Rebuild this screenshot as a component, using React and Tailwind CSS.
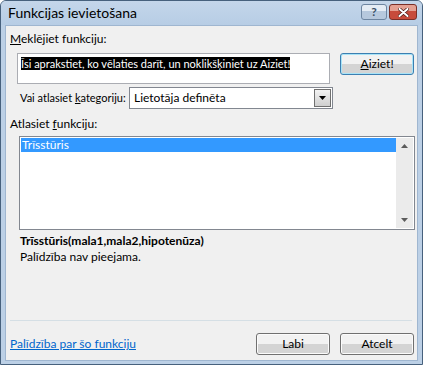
import React from "react";

const font = { fontFamily: 'Lato, "Noto Sans", sans-serif' };

function Btn({ children, primary, className = "" }) {
  return (
    <button
      className={
        "h-[22px] w-[74px] rounded-[3px] border text-[12px] text-black bg-gradient-to-b from-[#f2f2f2] from-50% to-[#d4d4d4] to-50% " +
        (primary
          ? "border-[#3c7fb1] shadow-[inset_0_0_0_1px_#a8e3f7] "
          : "border-[#707070] shadow-[inset_0_0_0_1px_#fbfbfb] ") +
        className
      }
    >
      {children}
    </button>
  );
}

export default function App() {
  return (
    <div
      className="w-[423px] h-[365px] bg-[#bcd0e6] border border-[#47617d] rounded-t-[6px] flex flex-col text-[11px] text-black overflow-hidden"
      style={font}
    >
      {/* title bar */}
      <div className="h-[24px] flex items-center pl-[7px] pr-[5px] bg-gradient-to-b from-[#c4d6ea] to-[#b7cde5]">
        <span className="text-[14px] leading-none">Funkcijas ievietošana</span>
        <div className="ml-auto flex gap-[2px] -mt-[2px]">
          <div className="w-[26px] h-[16px] rounded-[3px] border border-[#6d85a1] bg-gradient-to-b from-[#e4ecf5] from-45% to-[#b6c8dd] to-45% flex items-center justify-center text-[12px] font-bold text-[#3b4f66] leading-none">
            ?
          </div>
          <div className="w-[28px] h-[16px] rounded-[3px] border border-[#7a2f27] bg-gradient-to-b from-[#e4a092] from-45% to-[#c74b3b] to-45% flex items-center justify-center">
            <svg width="11" height="9" viewBox="0 0 11 9">
              <path d="M1.5 1 L9.5 8 M9.5 1 L1.5 8" stroke="#4a1a15" strokeWidth="3.4" strokeLinecap="round" />
              <path d="M1.5 1 L9.5 8 M9.5 1 L1.5 8" stroke="#ffffff" strokeWidth="2" strokeLinecap="round" />
            </svg>
          </div>
        </div>
      </div>

      {/* client area */}
      <div className="flex-1 mx-[4px] mb-[3px] border border-[#9fb6d0] bg-[#f0f0f0] flex flex-col pl-[2px] pr-[3px]">
        <div className="mt-[5px] ml-[2px] leading-[16px] text-[12px]">
          <u>M</u>eklējiet funkciju:
        </div>

        <div className="mt-[6px] flex items-start ml-[9px]">
          <div className="w-[314px] h-[31px] border border-[#abadb3] bg-white px-[3px] pt-[2px]">
            <span className="bg-black text-white text-[11px] leading-[15px] whitespace-nowrap">
              Īsi aprakstiet, ko vēlaties darīt, un noklikšķiniet uz Aiziet!
            </span>
          </div>
          <Btn primary className="ml-[10px]">
            <u>A</u>iziet!
          </Btn>
        </div>

        <div className="mt-[3px] flex items-center ml-[12px] text-[12px]">
          <span className="w-[109px] whitespace-nowrap text-[11px]">
            Vai atlasiet <u>k</u>ategoriju:
          </span>
          <div className="w-[204px] h-[22px] border border-[#828790] bg-white flex items-center pl-[4px]">
            <span>Lietotāja definēta</span>
            <div className="ml-auto mr-[1px] w-[17px] h-[18px] border border-[#707070] bg-gradient-to-b from-[#f2f2f2] to-[#cfcfcf] flex items-center justify-center">
              <svg width="7" height="4" viewBox="0 0 7 4">
                <path d="M0 0 H7 L3.5 4 Z" fill="#000" />
              </svg>
            </div>
          </div>
        </div>

        <div className="mt-[7px] ml-[2px] leading-[16px] text-[12px]">
          Atlasiet <u>f</u>unkciju:
        </div>

        <div className="mt-[4px] ml-[11px] w-[396px] h-[94px] border border-[#828790] bg-white flex p-[1px] text-[12px]">
          <div className="flex-1">
            <div className="h-[14px] bg-[#3399ff] text-white leading-[14px] pl-[1px]">Trīsstūris</div>
          </div>
          <div className="w-[17px] bg-[#ebebeb] flex flex-col items-center justify-between py-[6px]">
            <svg width="7" height="4" viewBox="0 0 7 4">
              <path d="M0 4 H7 L3.5 0 Z" fill="#5b5b5b" />
            </svg>
            <svg width="7" height="4" viewBox="0 0 7 4">
              <path d="M0 0 H7 L3.5 4 Z" fill="#5b5b5b" />
            </svg>
          </div>
        </div>

        <div className="mt-[3px] ml-[12px] font-bold leading-[16px] text-[12px]">Trīsstūris(mala1,mala2,hipotenūza)</div>
        <div className="ml-[12px] leading-[16px] text-[12px]">Palīdzība nav pieejama.</div>

        <div className="mt-auto ml-[2px] mr-[2px] h-px bg-[#d5dfe5]" />

        <div className="mt-[12px] mb-[5px] flex items-center ml-[2px] text-[12px]">
          <span className="text-[#0066cc] underline">Palīdzība par šo funkciju</span>
          <Btn className="ml-auto">Labi</Btn>
          <Btn className="ml-[10px]">Atcelt</Btn>
        </div>
      </div>
    </div>
  );
}
